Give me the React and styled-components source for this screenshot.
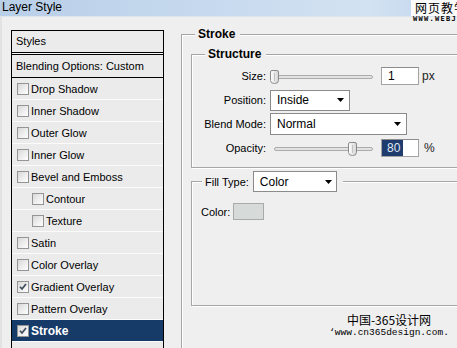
import React from 'react';
import styled, { createGlobalStyle } from 'styled-components';

const Global = createGlobalStyle`
  html, body { margin: 0; padding: 0; background: #efefef; overflow: hidden; }
  body { font-family: "Liberation Sans", Arial, sans-serif; font-size: 11px; color: #000; }
  * { box-sizing: border-box; }
`;

const Window = styled.div`
  position: relative;
  width: 457px;
  height: 348px;
  overflow: hidden;
  background: #efefef;
  display: flex;
  flex-direction: column;
`;

const TitleBar = styled.div`
  flex: none;
  height: 17px;
  padding-left: 2px;
  font-size: 12px;
  line-height: 15px;
  border-bottom: 1px solid #dde6ef;
  background: linear-gradient(to right, #b9cfe8 0%, #c6d9ee 45%, #d3e2f2 80%, #c0d5ec 100%);
`;

const Body = styled.div`
  flex: 1;
  display: flex;
  align-items: flex-start;
  border-left: 2px solid #e2e2e2;
`;

const LeftCol = styled.div`
  flex: none;
  padding: 13px 0 0 9px;
`;

const Panel = styled.div`
  width: 153px;
  height: 340px;
  border: 1px solid #000;
  border-bottom: none;
  background: #f7f7f7;
  display: flex;
  flex-direction: column;
`;

const Header = styled.div`
  height: 22px;
  line-height: 21px;
  padding-left: 4px;
  background: #ebebeb;
  border-bottom: 1px solid #000;
  margin-bottom: 1px;
`;

const BlendRow = styled.div`
  height: 24px;
  line-height: 22px;
  padding-left: 4px;
  background: #ebebeb;
  border-top: 1px solid #000;
  border-bottom: 1px solid #000;
`;

const Item = styled.div`
  flex: none;
  height: 22px;
  display: flex;
  align-items: center;
  gap: 2px;
  padding-left: ${p => (p.$indent ? 20 : 5)}px;
  border-bottom: 1px solid #fbfbfb;
  background: ${p => (p.$selected ? '#173b69' : '#ebebeb')};
  color: ${p => (p.$selected ? '#fff' : '#000')};
  font-weight: ${p => (p.$selected ? 'bold' : 'normal')};
  font-size: ${p => (p.$selected ? '12px' : '11px')};
`;

const Filler = styled.div`
  flex: 1;
  background: #ebebeb;
`;

const Box = styled.span`
  flex: none;
  width: 12px;
  height: 12px;
  border: 1px solid #959595;
  background: linear-gradient(135deg, #d9d9d9 0%, #f0f0f0 60%, #fdfdfd 100%);
  display: flex;
  align-items: center;
  justify-content: center;
`;

const Check = ({ checked }) => (
  <Box>
    {checked && (
      <svg width="8" height="8" viewBox="0 0 8 8">
        <path d="M1 3.8 L3 6 L7 1" fill="none" stroke="#3d4b5c" strokeWidth="1.7" />
      </svg>
    )}
  </Box>
);

const RightCol = styled.div`
  flex: none;
  margin-left: 17px;
  padding-top: 10px;
`;

const Group = styled.fieldset`
  margin: ${p => p.$mt || 0}px 0 0 0;
  padding: ${p => p.$pad};
  width: ${p => (p.$w ? `${p.$w}px` : 'auto')};
  min-width: 0;
  border: 1px solid #a6a6a6;
  box-shadow: inset 1px 1px 0 #fff, 1px 1px 0 #fff;
`;

const Legend = styled.legend`
  margin-left: ${p => p.$ml}px;
  padding: 0 5px 0 3px;
  font-weight: bold;
  font-size: 12px;
  line-height: 14px;
  background: #efefef;
`;

const FillLegend = styled.legend`
  margin-left: ${p => p.$ml}px;
  padding: 0 6px 0 3px;
  height: 21px;
  display: flex;
  align-items: center;
  gap: 4px;
  background: #efefef;
`;

const FormGrid = styled.div`
  display: grid;
  grid-template-columns: 74px 1fr;
  grid-auto-rows: 22px;
  column-gap: 4px;
  row-gap: 2px;
  align-items: center;
`;

const Label = styled.span`
  text-align: right;
  white-space: nowrap;
`;

const Controls = styled.div`
  display: flex;
  align-items: center;
`;

const Track = styled.div`
  position: relative;
  flex: none;
  width: 99px;
  height: 4px;
  margin: 1px 8px 0 4px;
  border: 1px solid #ababab;
  border-radius: 2px;
  background: #e2e2e2;
`;

const Thumb = styled.svg`
  position: absolute;
  top: -6px;
`;

const Slider = ({ value }) => (
  <Track>
    <Thumb width="9" height="14" viewBox="0 0 9 14" style={{ left: `calc(${value}% - 5px)` }}>
      <defs>
        <linearGradient id={`tg${value}`} x1="0" y1="0" x2="1" y2="0">
          <stop offset="0" stopColor="#ffffff" />
          <stop offset="1" stopColor="#d4d4d4" />
        </linearGradient>
      </defs>
      <path
        d="M2 0.5 H7 Q8.5 0.5 8.5 2 V10.5 Q8.5 13.5 4.5 13.5 Q0.5 13.5 0.5 10.5 V2 Q0.5 0.5 2 0.5 Z"
        fill={`url(#tg${value})`}
        stroke="#8a8a8a"
      />
      <path d="M4.5 3 V11" stroke="#c2c2c2" />
    </Thumb>
  </Track>
);

const Input = styled.div`
  flex: none;
  width: 38px;
  height: 18px;
  border: 1px solid #a4a4a4;
  border-top-color: #8c8c8c;
  background: #fff;
  font-size: 12px;
  line-height: 16px;
  padding-left: ${p => p.$pl}px;
  display: flex;
  align-items: stretch;
`;

const Selected = styled.span`
  background: #1f3c6e;
  color: #dfe8f2;
  padding: 0 3px 0 5px;
`;

const Unit = styled.span`
  margin-left: ${p => p.$ml}px;
  font-size: 12px;
  color: #222;
`;

const SelectBox = styled.div`
  flex: none;
  width: ${p => p.$w}px;
  height: ${p => p.$h}px;
  border: 1px solid #8b8b8b;
  background: #fff;
  display: flex;
  align-items: center;
  justify-content: space-between;
  padding: 0 ${p => p.$pr}px 0 6px;
  font-size: 12px;
`;

const Arrow = () => (
  <svg width="7" height="4" viewBox="0 0 7 4">
    <path d="M0 0 H7 L3.5 4 Z" fill="#000" />
  </svg>
);

const Select = ({ w, h, pr, children }) => (
  <SelectBox $w={w} $h={h} $pr={pr}>
    <span>{children}</span>
    <Arrow />
  </SelectBox>
);

const ColorRow = styled.div`
  display: flex;
  align-items: center;
  gap: 3px;
  height: 17px;
`;

const Swatch = styled.div`
  width: 31px;
  height: 17px;
  background: #d6dbd9;
  border: 1px solid #a9a9a9;
`;

const TopMark = styled.div`
  position: absolute;
  top: 0;
  left: 411px;
  display: flex;
  flex-direction: column;
`;

const TopMarkCN = styled.div`
  background: #fbfbfb;
  padding: 0 0 1px 4px;
  font-family: "Noto Sans CJK SC", sans-serif;
  font-size: 12px;
  line-height: 15px;
  letter-spacing: 1px;
  white-space: nowrap;
`;

const TopMarkEN = styled.div`
  font-family: "DejaVu Sans Mono", monospace;
  font-weight: bold;
  font-size: 7px;
  line-height: 7px;
  letter-spacing: 1.3px;
  padding-left: 2px;
  white-space: nowrap;
`;

const BottomMark = styled.div`
  position: absolute;
  left: 328px;
  top: 313px;
  width: 122px;
  text-align: center;
`;

const MarkCN = styled.div`
  font-family: "Noto Sans CJK SC", sans-serif;
  font-size: 12px;
  line-height: 14px;
  white-space: nowrap;
`;

const MarkURL = styled.div`
  font-family: "Liberation Mono", monospace;
  font-size: 9.5px;
  line-height: 12px;
  white-space: nowrap;
`;

const items = [
  { name: 'Drop Shadow' },
  { name: 'Inner Shadow' },
  { name: 'Outer Glow' },
  { name: 'Inner Glow' },
  { name: 'Bevel and Emboss' },
  { name: 'Contour', indent: true },
  { name: 'Texture', indent: true },
  { name: 'Satin' },
  { name: 'Color Overlay' },
  { name: 'Gradient Overlay', checked: true },
  { name: 'Pattern Overlay' },
  { name: 'Stroke', checked: true, selected: true },
];

export default function App() {
  return (
    <Window>
      <Global />
      <TitleBar>Layer Style</TitleBar>
      <Body>
        <LeftCol>
          <Panel>
            <Header>Styles</Header>
            <BlendRow>Blending Options: Custom</BlendRow>
            {items.map(it => (
              <Item key={it.name} $indent={it.indent} $selected={it.selected}>
                <Check checked={it.checked} />
                <span>{it.name}</span>
              </Item>
            ))}
            <Filler />
          </Panel>
        </LeftCol>
        <RightCol>
          <Group $w={330} $pad="6px 0 80px 9px">
            <Legend $ml={4}>Stroke</Legend>
            <Group $pad="4px 0 8px 0">
              <Legend $ml={13}>Structure</Legend>
              <FormGrid>
                <Label>Size:</Label>
                <Controls>
                  <Slider value={0} />
                  <Input $pl={6}>1</Input>
                  <Unit $ml={3}>px</Unit>
                </Controls>
                <Label>Position:</Label>
                <Controls>
                  <Select w={80} h={21} pr={5}>Inside</Select>
                </Controls>
                <Label>Blend Mode:</Label>
                <Controls>
                  <Select w={137} h={22} pr={5}>Normal</Select>
                </Controls>
                <Label>Opacity:</Label>
                <Controls>
                  <Slider value={80} />
                  <Input $pl={0}>
                    <Selected>80</Selected>
                  </Input>
                  <Unit $ml={5}>%</Unit>
                </Controls>
              </FormGrid>
            </Group>
            <Group $mt={3} $pad="11px 0 85px 9px">
              <FillLegend $ml={1}>
                <span>Fill Type:</span>
                <Select w={84} h={21} pr={4}>Color</Select>
              </FillLegend>
              <ColorRow>
                <span>Color:</span>
                <Swatch />
              </ColorRow>
            </Group>
          </Group>
        </RightCol>
      </Body>
      <TopMark>
        <TopMarkCN>网页教学网</TopMarkCN>
        <TopMarkEN>WWW.WEBJX.COM</TopMarkEN>
      </TopMark>
      <BottomMark>
        <MarkCN>中国-365设计网</MarkCN>
        <MarkURL>‘www.cn365design.com.</MarkURL>
      </BottomMark>
    </Window>
  );
}
